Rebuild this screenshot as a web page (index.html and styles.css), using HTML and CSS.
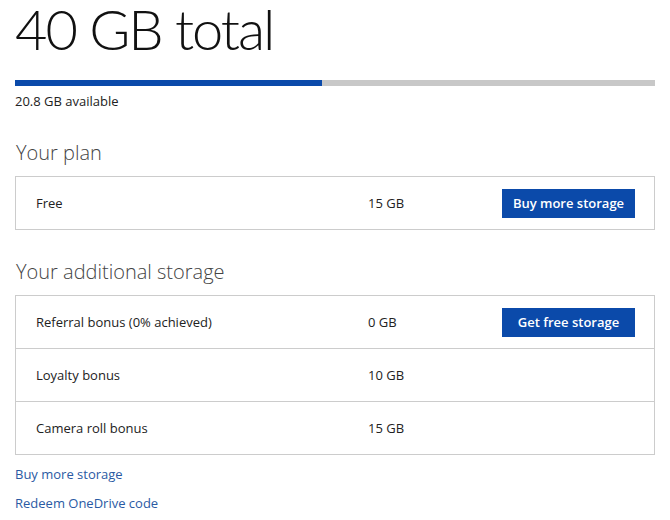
FILE: index.html
```html
<!DOCTYPE html>
<html lang="en">
<head>
    <meta charset="UTF-8">
    <title>Storage</title>
    <link rel="stylesheet" href="styles.css">
</head>
<body>
    <div class="page">
        <h1 class="total">40 GB total</h1>
        <div class="meter">
            <div class="meter-used" style="width: 48%"></div>
        </div>
        <p class="available">20.8 GB available</p>

        <h2 class="section-title">Your plan</h2>
        <div class="table">
            <div class="row">
                <span class="name">Free</span>
                <span class="amount">15 GB</span>
                <button class="btn">Buy more storage</button>
            </div>
        </div>

        <h2 class="section-title">Your additional storage</h2>
        <div class="table">
            <div class="row">
                <span class="name">Referral bonus (0% achieved)</span>
                <span class="amount">0 GB</span>
                <button class="btn">Get free storage</button>
            </div>
            <div class="row">
                <span class="name">Loyalty bonus</span>
                <span class="amount">10 GB</span>
            </div>
            <div class="row">
                <span class="name">Camera roll bonus</span>
                <span class="amount">15 GB</span>
            </div>
        </div>

        <div class="links">
            <a href="#">Buy more storage</a>
            <a href="#">Redeem OneDrive code</a>
        </div>
    </div>
</body>
</html>
```

FILE: styles.css
```css
body {
    margin: 0;
    background: #fff;
    font-family: "Open Sans", "Noto Sans", sans-serif;
    font-size: 13px;
    color: #222;
}
.page {
    padding: 0 15px;
}
.total {
    margin: 0;
    font-family: Lato, "Open Sans", sans-serif;
    font-size: 56px;
    font-weight: 300;
    line-height: 58px;
    letter-spacing: -2px;
    color: #111;
}
.meter {
    margin-top: 22px;
    height: 6px;
    background: #c8c8c8;
}
.meter-used {
    height: 100%;
    background: #0b4aaa;
}
.available {
    margin: 6px 0 0;
    padding-bottom: 1px;
    line-height: 18px;
}
.section-title {
    margin: 28px 0 9px 1px;
    font-size: 20px;
    font-weight: 300;
    line-height: 28px;
    color: #444;
}
.table {
    border: 1px solid #ccc;
}
.row {
    display: grid;
    grid-template-columns: 332px 1fr auto;
    align-items: center;
    height: 52px;
    padding: 0 19px 0 20px;
}
.row + .row {
    border-top: 1px solid #ccc;
}
.btn {
    width: 133px;
    height: 29px;
    border: none;
    background: #0b4aaa;
    color: #fff;
    font-family: inherit;
    font-size: 13px;
    font-weight: 600;
    cursor: pointer;
}
.links {
    display: flex;
    flex-direction: column;
    gap: 10px;
    margin-top: 10px;
}
.links a {
    color: #2a5aa3;
    text-decoration: none;
    line-height: 19px;
}
```
